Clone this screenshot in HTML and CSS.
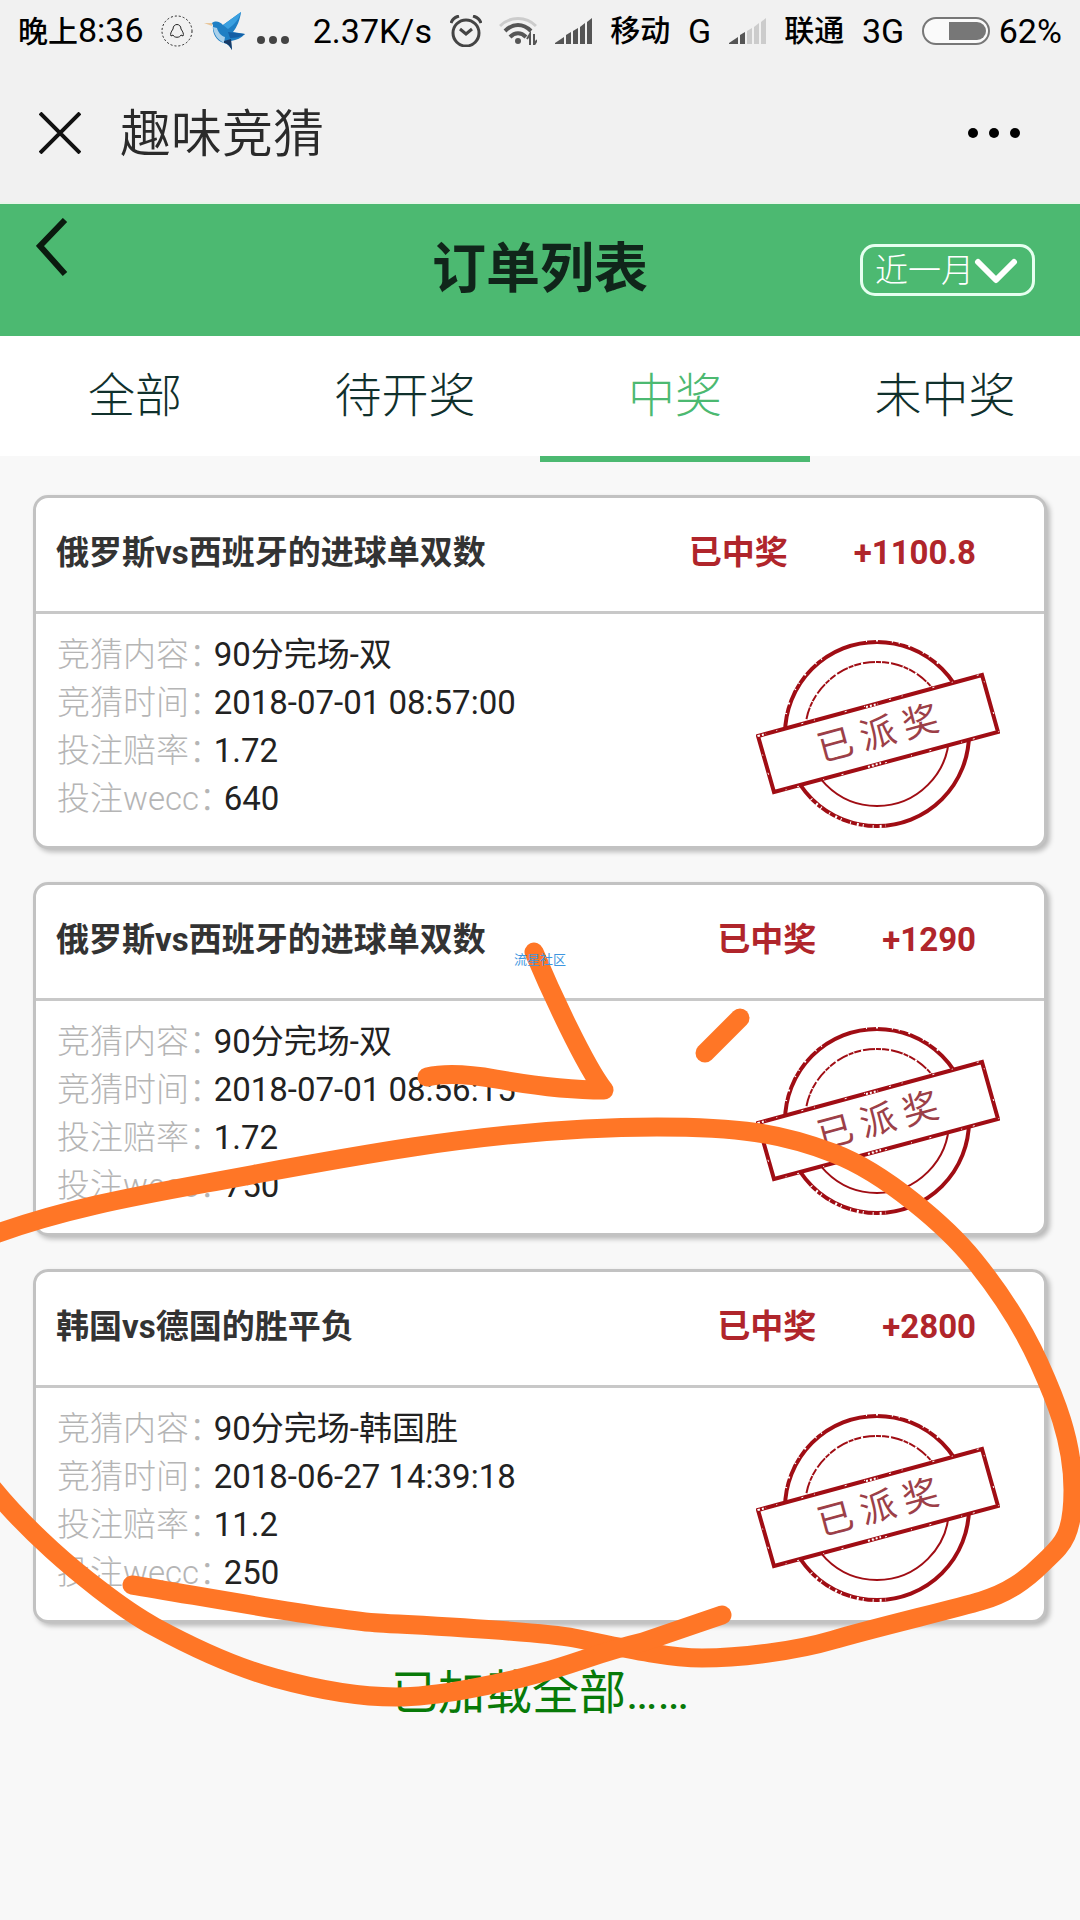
FILE: index.html
```html
<!DOCTYPE html>
<html lang="zh-CN">
<head>
    <meta charset="UTF-8">
    <meta name="viewport" content="width=device-width, initial-scale=1.0">
    <title>趣味竞猜</title>
    <link rel="stylesheet" href="styles.css">
</head>
<body>
    <!-- shared icons -->
    <svg class="defs" width="0" height="0" aria-hidden="true">
        <symbol id="stamp" viewBox="0 0 244 190">
            <g fill="none" stroke="#a00d14">
                <circle cx="121" cy="95" r="92" stroke-width="4"/>
                <circle cx="121" cy="95" r="72" stroke-width="2"/>
            </g>
            <g fill="none" stroke="#fff">
                <path d="M30 75A93 93 0 0 1 70 17M110 2A94 94 0 0 1 190 32" stroke-width="2" stroke-dasharray="1 9 2 14 1 6"/>
                <path d="M55 160A92 92 0 0 0 130 187" stroke-width="3" stroke-dasharray="1 6 2 4 1 9"/>
                <path d="M49 90A72 72 0 0 1 176 49" stroke-width="3" stroke-dasharray="1 7 2 12 1 5"/>
            </g>
            <path d="M2 97L226 36L242 93L18 153Z" fill="#fff" stroke="#a00d14" stroke-width="4"/>
            <path d="M1 97L226 35L243 93L18 154Z" fill="none" stroke="#fff" stroke-width="1" stroke-dasharray="2 18 1 25 2 11 1 31"/>
            <path d="M110 68l12-3M112 128l13-4M2 97l8-2" stroke="#fff" stroke-width="2" stroke-dasharray="2 2"/>
        </symbol>
        <symbol id="signal" viewBox="0 0 38 26">
            <path d="M0 26v-1l9-6v7z"/>
            <path d="M11 26v-9l5-3v12z"/>
            <path class="high" d="M18 26V13l5-3v16z"/>
            <path class="high" d="M25 26V9l5-4v21z"/>
            <path class="high" d="M32 26V4l5-4v26z"/>
        </symbol>
    </svg>

    <div class="page">
        <div class="status-bar">
            <span><span class="cn">晚上</span>8:36</span>
            <div class="notices">
                <svg width="32" height="32" viewBox="0 0 32 32" fill="none" stroke="#222">
                    <circle cx="16" cy="16" r="15" stroke-dasharray="2 2"/>
                    <path d="M12 14c0-6 8-6 8 0c2 3 3 5 2 7l-2-1c-1 3-7 3-8 0l-2 1c-1-2 0-4 2-7z"/>
                </svg>
                <svg width="42" height="38" viewBox="0 0 42 38">
                    <path d="M0 11l9 0l-1 3z" fill="#e9c79c"/>
                    <path d="M8 11c4-3 8-1 11 2L37 0c-1 8-4 15-8 20l12 2c-4 4-8 6-14 7l1 9c-3-5-5-6-8-7c-8-2-12-10-11-18z" fill="#1f7fc4"/>
                    <path d="M19 13L37 0c-2 7-6 12-13 17z" fill="#3aa0e0"/>
                    <path d="M9 15c1 8 5 13 11 16l1-6c-4-1-7-5-8-9z" fill="#a9d0ea"/>
                    <path d="M20 29l7-2l1 11c-3-5-5-7-8-7z" fill="#173a66"/>
                    <path d="M24 20l17 2c-5 3-9 4-15 4z" fill="#155fa5"/>
                </svg>
                <svg class="more-notices" width="32" height="8" viewBox="0 0 32 8" fill="#444">
                    <circle cx="4" cy="4" r="4"/><circle cx="16" cy="4" r="4"/><circle cx="28" cy="4" r="4"/>
                </svg>
            </div>
            <span class="speed">2.37K/s</span>
            <svg width="32" height="32" viewBox="0 0 32 32" fill="none" stroke="#444" stroke-width="3">
                <circle cx="16" cy="18" r="13"/>
                <path d="M10 14l6 5l6-5M1 8c1-3 4-6 8-7M31 8c-1-3-4-6-8-7"/>
            </svg>
            <svg width="38" height="28" viewBox="0 0 38 28" fill="none" stroke="#555" stroke-width="4">
                <path d="M1 9c10-10 26-10 36 0" stroke="#ccc" stroke-width="3"/>
                <path d="M6 14c8-8 18-8 26 0M11 20c5-5 11-5 16 0"/>
                <circle cx="19" cy="24" r="3" fill="#555" stroke="none"/>
                <path d="M31 28V17l-3 5M35 17v11l3-5" stroke-width="2"/>
            </svg>
            <svg class="signal" width="38" height="26"><use href="#signal"/></svg>
            <span class="cn">移动</span>
            <span>G</span>
            <svg class="signal weak" width="38" height="26"><use href="#signal"/></svg>
            <span class="cn">联通</span>
            <span>3G</span>
            <div class="power">
                <svg width="68" height="28" viewBox="0 0 68 28">
                    <rect x="1" y="1" width="66" height="26" rx="13" fill="#fafafa" stroke="#777" stroke-width="2"/>
                    <path d="M27 5h28a9 9 0 0 1 0 18h-28z" fill="#777"/>
                </svg>
                <span>62%</span>
            </div>
        </div>

        <div class="title-bar">
            <button class="icon-btn" aria-label="关闭">
                <svg width="42" height="42" viewBox="0 0 42 42" stroke="#111" stroke-width="4">
                    <path d="M1 1l40 40M41 1L1 41"/>
                </svg>
            </button>
            <h1>趣味竞猜</h1>
            <button class="icon-btn more" aria-label="更多">
                <svg width="52" height="10" viewBox="0 0 52 10">
                    <circle cx="5" cy="5" r="5"/><circle cx="26" cy="5" r="5"/><circle cx="47" cy="5" r="5"/>
                </svg>
            </button>
        </div>

        <header class="header">
            <button class="icon-btn back" aria-label="返回">
                <svg width="32" height="58" viewBox="0 0 32 58" fill="none" stroke="#0a1a0e" stroke-width="6">
                    <path d="M29 2L4 28l25 28"/>
                </svg>
            </button>
            <h2>订单列表</h2>
            <div class="period">
                <select aria-label="时间范围">
                    <option>近一月</option>
                </select>
                <svg width="44" height="26" viewBox="0 0 44 26" fill="none" stroke="#fff" stroke-width="6" stroke-linecap="round" stroke-linejoin="round">
                    <path d="M4 4l18 18L40 4"/>
                </svg>
            </div>
        </header>

        <nav class="tabs">
            <button class="tab">全部</button>
            <button class="tab">待开奖</button>
            <button class="tab active">中奖</button>
            <button class="tab">未中奖</button>
        </nav>

        <main class="orders">
            <article class="card">
                <div class="card-head">
                    <h3>俄罗斯vs西班牙的进球单双数</h3>
                    <div class="result"><span>已中奖</span><span>+1100.8</span></div>
                </div>
                <div class="card-body">
                    <ul>
                        <li><span class="label">竞猜内容：</span> 90分完场-双</li>
                        <li><span class="label">竞猜时间：</span> 2018-07-01 08:57:00</li>
                        <li><span class="label">投注赔率：</span> 1.72</li>
                        <li><span class="label">投注wecc：</span> 640</li>
                    </ul>
                    <svg class="stamp" viewBox="0 0 244 190">
                        <use href="#stamp"/>
                        <text x="78 122 166" y="107" transform="rotate(-15 122 95)" text-anchor="middle">已派奖</text>
                    </svg>
                </div>
            </article>

            <article class="card">
                <div class="card-head">
                    <h3>俄罗斯vs西班牙的进球单双数</h3>
                    <div class="result"><span>已中奖</span><span>+1290</span></div>
                </div>
                <div class="card-body">
                    <ul>
                        <li><span class="label">竞猜内容：</span> 90分完场-双</li>
                        <li><span class="label">竞猜时间：</span> 2018-07-01 08:56:15</li>
                        <li><span class="label">投注赔率：</span> 1.72</li>
                        <li><span class="label">投注wecc：</span> 750</li>
                    </ul>
                    <svg class="stamp" viewBox="0 0 244 190">
                        <use href="#stamp"/>
                        <text x="78 122 166" y="107" transform="rotate(-15 122 95)" text-anchor="middle">已派奖</text>
                    </svg>
                </div>
            </article>

            <article class="card">
                <div class="card-head">
                    <h3>韩国vs德国的胜平负</h3>
                    <div class="result"><span>已中奖</span><span>+2800</span></div>
                </div>
                <div class="card-body">
                    <ul>
                        <li><span class="label">竞猜内容：</span> 90分完场-韩国胜</li>
                        <li><span class="label">竞猜时间：</span> 2018-06-27 14:39:18</li>
                        <li><span class="label">投注赔率：</span> 11.2</li>
                        <li><span class="label">投注wecc：</span> 250</li>
                    </ul>
                    <svg class="stamp" viewBox="0 0 244 190">
                        <use href="#stamp"/>
                        <text x="78 122 166" y="107" transform="rotate(-15 122 95)" text-anchor="middle">已派奖</text>
                    </svg>
                </div>
            </article>
        </main>

        <p class="loaded">已加载全部……</p>

        <!-- hand-drawn marks over the list -->
        <svg class="scribble" viewBox="0 0 1080 1920" aria-hidden="true">
            <path d="M-10 1236C60 1210 130 1197 207 1183S340 1158 413 1147S575 1127 657 1127S780 1133 833 1153S948 1228 974 1260S1024 1330 1039 1363S1073 1440 1073 1490S1060 1546 1043 1563S1008 1593 981 1601S870 1629 833 1640S740 1658 702 1658S610 1645 574 1638S430 1626 379 1623S200 1596 132 1585"/>
            <path d="M-10 1485C10 1510 30 1530 52 1550S120 1608 155 1627S235 1667 275 1678S356 1697 396 1697S500 1684 540 1673S600 1652 643 1642L722 1615"/>
            <path d="M534 952C550 990 585 1066 604 1090C570 1090 530 1085 496 1079S440 1074 427 1077"/>
            <path d="M740 1018L705 1053"/>
        </svg>
        <div class="watermark">流星社区</div>
    </div>
</body>
</html>
```
FILE: styles.css
```css
* {
    margin: 0;
    padding: 0;
    box-sizing: border-box;
}

body {
    background: #f8f8f8;
    color: #222;
    font-family: Roboto, "Noto Sans CJK SC", sans-serif;
}

button,
select {
    border: none;
    background: none;
    color: inherit;
    font: inherit;
    cursor: pointer;
}

svg {
    display: block;
    flex-shrink: 0;
}

.defs {
    position: absolute;
}

.page {
    position: relative;
    min-height: 100vh;
    overflow: hidden;
}

/* phone status bar */
.status-bar {
    display: flex;
    align-items: center;
    justify-content: space-between;
    height: 62px;
    padding: 0 18px;
    background: #f1f1f1;
    color: #000;
    font-size: 34px;
    line-height: 40px;
    white-space: nowrap;
}

.cn {
    font-size: 30px;
    font-weight: 500;
}

.notices {
    display: flex;
    align-items: center;
    gap: 11px;
}

.more-notices {
    margin-top: 18px;
}

.speed {
    margin-left: 6px;
}

.signal {
    --high: #555;
    fill: #555;
}

.signal.weak {
    --high: #ccc;
}

.high {
    fill: var(--high);
}

.power {
    display: flex;
    align-items: center;
    gap: 9px;
}

/* title bar */
.title-bar {
    display: flex;
    align-items: center;
    height: 142px;
    padding: 2px 60px 0 39px;
    background: #f1f1f1;
    border-bottom: 2px solid #e9f5ea;
}

.title-bar h1 {
    margin-left: 39px;
    padding-top: 4px;
    color: #2a2a2a;
    font-size: 51px;
    font-weight: 350;
    line-height: 60px;
}

.more {
    margin-left: auto;
}

.header {
    display: grid;
    grid-template-columns: 1fr auto 1fr;
    align-items: center;
    height: 132px;
    padding: 0 36px;
    background: #4cb971;
}

.back {
    align-self: start;
    justify-self: start;
    margin-top: 14px;
}

.header h2 {
    color: #10251a;
    font-size: 54px;
    font-weight: 700;
    line-height: 64px;
}

.period {
    display: flex;
    align-items: center;
    justify-self: end;
    height: 52px;
    margin-right: 9px;
    padding: 2px 14px 0 12px;
    border: 3px solid #e6fff0;
    border-radius: 15px;
    color: #fff;
}

.period select {
    appearance: none;
    font-size: 33px;
    font-weight: 300;
    line-height: 44px;
}

/* tabs */
.tabs {
    display: flex;
    height: 120px;
    background: #fff;
}

.tab {
    flex: 1;
    height: 126px;
    border-bottom: 6px solid transparent;
    color: #10302c;
    font-size: 47px;
    font-weight: 300;
    line-height: 60px;
}

.tab.active {
    border-bottom-color: #4cb971;
    color: #4cb971;
}

/* order list */
.orders {
    display: flex;
    flex-direction: column;
    gap: 33px;
    padding: 39px 33px 0;
}

.card {
    background: #fff;
    border: 3px solid #c2c2c2;
    border-radius: 15px;
    box-shadow: 3px 3px 5px rgba(0, 0, 0, 0.25);
    font-size: 33px;
    line-height: 48px;
}

.card-head {
    display: flex;
    justify-content: space-between;
    align-items: center;
    height: 116px;
    padding: 0 68px 4px 20px;
    border-bottom: 3px solid #c8c8c8;
}

.card-head h3 {
    color: #333;
    font-size: 33px;
    font-weight: 700;
}

.result {
    display: flex;
    gap: 66px;
    color: #b0252b;
    font-weight: 700;
}

.card-body {
    display: flex;
    justify-content: space-between;
    padding: 17px 44px 17px 21px;
}

.card-body ul {
    list-style: none;
    font-weight: 400;
}

.label {
    color: #b5b5b5;
    font-weight: 300;
    font-feature-settings: "halt";
}

.stamp {
    width: 244px;
    height: 190px;
    margin-top: 8px;
}

.stamp text {
    fill: #9c3f48;
    font-size: 36px;
    font-weight: 400;
}

.loaded {
    margin-top: 40px;
    color: #087a08;
    font-size: 47px;
    font-weight: 400;
    line-height: 60px;
    text-align: center;
}

.scribble {
    position: absolute;
    top: 0;
    left: 0;
    width: 100%;
    fill: none;
    stroke: #ff7626;
    stroke-width: 19;
    stroke-linecap: round;
    stroke-linejoin: round;
    pointer-events: none;
}

.watermark {
    position: absolute;
    top: 50%;
    left: 50%;
    transform: translate(-50%, -50%);
    color: #3d96e0;
    font-size: 13px;
    line-height: 16px;
}
```
